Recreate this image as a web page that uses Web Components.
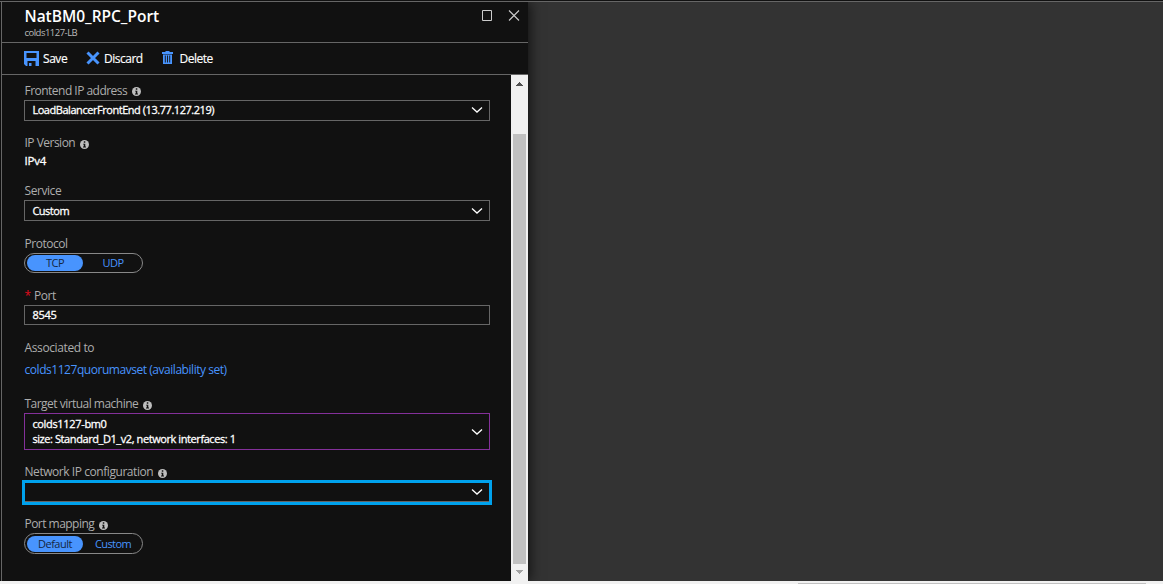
<!DOCTYPE html>
<html lang="en">
<head>
<meta charset="utf-8">
<title>NatBM0_RPC_Port</title>
<style>
html,body{margin:0;height:100%;overflow:hidden;background:#333}
body{font-family:"Open Sans","Noto Sans",sans-serif;font-size:12px;color:#fff}
</style>
</head>
<body>
<portal-page></portal-page>
<script>
function define(name, html, init){
  const t=document.createElement('template');
  t.innerHTML=html;
  customElements.define(name,class extends HTMLElement{
    connectedCallback(){
      if(this.shadowRoot)return;
      this.attachShadow({mode:'open'}).append(t.content.cloneNode(true));
      if(init)init(this,this.shadowRoot);
    }
  });
}

/* Single line of text whose tracking is adjusted to occupy the width in "w" */
define('fit-text',`<style>:host{display:inline-block;white-space:nowrap}span{display:inline-block}</style><span><slot></slot></span>`,(host,root)=>{
  const s=root.querySelector('span'),w=+host.getAttribute('w'),n=host.textContent.length;
  const natural=s.getBoundingClientRect().width;
  s.style.letterSpacing=((w-.8-natural)/n)+'px';
  host.style.width=w+'px';
});

define('info-dot',`<style>:host{display:block;width:9px;height:9px;margin:3px 0 0 4px}svg{display:block}</style>
<svg width="9" height="9" viewBox="0 0 9 9"><circle cx="4.5" cy="4.5" r="4.5" fill="#bebebe"/><path d="M3.8 1.3h1.5v1.4H3.8zM3.1 3.7h2.2v2.8h.7v.9H3v-.9h.8V4.5h-.7z" fill="#111"/></svg>`);

define('down-chevron',`<style>:host{display:block;width:12px;height:8px;margin-bottom:1px}svg{display:block}</style>
<svg width="12" height="8" viewBox="0 0 12 8"><path d="M1 1.5l5 4.6 5-4.6" fill="none" stroke="#fff" stroke-width="1.3"/></svg>`);

define('form-field',`<style>:host{display:block}
.l{display:flex;align-items:center;height:18px;line-height:18px;color:#adadad;font-size:12px;padding-left:.5px}
.r{color:#e00b1c;width:9.5px;font-size:12px}</style>
<div class="l"><slot name="label"></slot></div><slot></slot>`,(host,root)=>{
  if(host.hasAttribute('required')){const r=document.createElement('span');r.className='r';r.textContent='*';root.querySelector('.l').prepend(r);}
});

define('select-box',`<style>:host{display:flex;align-items:center;justify-content:space-between;box-sizing:border-box;width:466px;height:21px;border:1px solid #666;padding:0 6px 0 7.4px;font-size:11px;line-height:15px;-webkit-text-stroke:.3px #fff}
:host([low]){padding-top:1px}
:host([plain]){height:20px}
:host([tall]){height:37px;border-color:#84309a}
:host([tall]) down-chevron{margin-bottom:0}
:host([focused]){width:470px;height:25px;border:3px solid #00a2ed;margin:-1px -2px;box-shadow:inset 0 -1px #666}
div{display:flex;flex-direction:column;margin-bottom:2px}
:host([low]) div{margin-bottom:1px}
:host([low]) down-chevron{margin-bottom:0}</style>
<div><slot></slot></div><down-chevron></down-chevron>`,(host,root)=>{
  if(host.hasAttribute('plain'))root.querySelector('down-chevron').remove();
});

define('option-pill',`<style>:host{display:flex;box-sizing:border-box;width:119px;height:20px;border:1px solid #888;border-radius:11px;padding:1px 2px;font-size:11px;color:#4894fe}
:host([tall]){height:21px;padding-top:2px}
div{flex:none;width:56px;height:16px;line-height:16px;border-radius:8px;text-align:center}
.on{background:#4894fe;color:#14263f}.off{margin-left:2px}</style>
<div class="on"><slot name="on"></slot></div><div class="off"><slot name="off"></slot></div>`);

define('tool-button',`<style>:host{display:flex;align-items:center;font-size:12px;-webkit-text-stroke:.15px #fff}</style><slot></slot>`);

define('v-scrollbar',`<style>:host{display:flex;flex-direction:column;align-items:center;width:17px;background:#f1f1f1}
svg{display:block;flex:none}.t{width:13px;height:430px;background:#c1c1c1;margin:42px 0 0}</style>
<svg width="17" height="17"><path d="M5 11h7v-1h-1v-1h-1v-1H9V7H8v1H7v1H6v1H5z" fill="#505050"/></svg><div class="t"></div>
<svg width="17" height="17"><path d="M5 6h7v1h-1v1h-1v1H9v1H8V9H7V8H6V7H5z" fill="#a3a3a3"/></svg>`);

define('blade-header',`<style>:host{display:flex;justify-content:space-between;height:40px;border-bottom:1px solid #666}
.t{padding:4px 0 0 22.5px}.h{display:block;font-size:15.5px;font-weight:600;line-height:20px;height:20px}
.s{display:block;font-size:9.5px;line-height:12px;color:#bbb;height:12px;margin-top:1px}
svg{display:block;margin:8px 8px 0 0}</style>
<div class="t"><div class="h"><fit-text w="135.5">NatBM0_RPC_Port</fit-text></div><div class="s"><fit-text w="53.5">colds1127-LB</fit-text></div></div>
<svg width="39" height="12" viewBox="0 0 39 12" fill="none" stroke="#ccc"><path d="M1.5.5h9v10h-9z"/><path d="M28 .5l10 10m0-10l-10 10" stroke-width="1.1"/></svg>`);

define('blade-toolbar',`<style>:host{display:flex;height:31px;border-bottom:1px solid #666;padding-left:22px}
svg{display:block}</style>
<tool-button><svg width="19" height="15" viewBox="0 0 19 15"><path fill="#4894fe" fill-rule="evenodd" d="M0 0h15v15H2l-2-2zM2.500 2v5h10V2zM3.500 10v5h8v-5z"/><path fill="#4894fe" d="M5 12h2.500v3H5z"/></svg><fit-text w="25">Save</fit-text></tool-button>
<tool-button style="margin-left:17.5px"><svg width="18.500" height="16" viewBox="0 0 18.5 16"><path stroke="#4894fe" stroke-width="3" d="M1.500 1.500l11 11M12.500 1.500l-11 11"/></svg><fit-text w="39.5">Discard</fit-text></tool-button>
<tool-button style="margin-left:18.5px"><svg width="17.5" height="15" viewBox="0 0 17.5 15"><path fill="#4894fe" d="M3.500 1V0h4v1H11v2H0V1zM1 3.500h9V13H1z"/><path d="M3.300 4.500v7M5.500 4.500v7M7.700 4.500v7" stroke="#111" stroke-width=".9"/></svg><fit-text w="34">Delete</fit-text></tool-button>`);

define('rule-form',`<style>:host{display:block;padding:7px 0 0 22px;width:487px;box-sizing:content-box}
.v{height:18px;line-height:18px;font-size:11.5px;-webkit-text-stroke:.3px #fff;padding-left:.5px}
.a{height:18px;line-height:18px;margin-top:4px;color:#4894fe;padding-left:.5px}</style>
<form-field><fit-text slot="label" w="103.5">Frontend IP address</fit-text><info-dot slot="label" style="margin-top:1px"></info-dot>
<select-box><fit-text w="182.5">LoadBalancerFrontEnd (13.77.127.219)</fit-text></select-box></form-field>
<form-field style="margin-top:13px"><fit-text slot="label" w="51.5">IP Version</fit-text><info-dot slot="label"></info-dot><div class="v"><fit-text w="22.5">IPv4</fit-text></div></form-field>
<form-field style="margin-top:12px"><fit-text slot="label" w="37.5">Service</fit-text><select-box low><fit-text w="37.5">Custom</fit-text></select-box></form-field>
<form-field style="margin-top:14px"><fit-text slot="label" w="44">Protocol</fit-text><option-pill><fit-text slot="on" w="19">TCP</fit-text><fit-text slot="off" w="22">UDP</fit-text></option-pill></form-field>
<form-field required style="margin-top:14px"><fit-text slot="label" w="22.5">Port</fit-text><select-box plain><fit-text w="25">8545</fit-text></select-box></form-field>
<form-field style="margin-top:14px"><fit-text slot="label" w="70.5">Associated to</fit-text><div class="a"><fit-text w="203">colds1127quorumavset (availability set)</fit-text></div></form-field>
<form-field style="margin-top:16px"><fit-text slot="label" w="114.5">Target virtual machine</fit-text><info-dot slot="label"></info-dot><select-box tall><fit-text w="75">colds1127-bm0</fit-text><fit-text w="204">size: Standard_D1_v2, network interfaces: 1</fit-text></select-box></form-field>
<form-field style="margin-top:13px"><fit-text slot="label" w="129.5">Network IP configuration</fit-text><info-dot slot="label"></info-dot><select-box focused></select-box></form-field>
<form-field style="margin-top:11px"><fit-text slot="label" w="70.5">Port mapping</fit-text><info-dot slot="label"></info-dot><option-pill tall><fit-text slot="on" w="35">Default</fit-text><fit-text slot="off" w="37">Custom</fit-text></option-pill></form-field>`);

define('portal-blade',`<style>:host{display:flex;flex-direction:column;width:526px;height:579px;background:#111;border-left:1px solid #666;box-shadow:2px 0 12px #000a}
.b{display:flex;flex:1;min-height:0}</style>
<blade-header></blade-header><blade-toolbar></blade-toolbar><div class="b"><rule-form></rule-form><v-scrollbar></v-scrollbar></div>`);

define('portal-page',`<style>:host{display:flex;flex-direction:column;width:1163px;height:584px;background:#333;overflow:hidden}
.top{height:1px;background:#111;border-bottom:1px solid #666;flex:none}
.m{height:579px;padding-left:1px;background:linear-gradient(90deg,#111 1px,#333 1px);overflow:hidden}
.foot{display:flex;align-items:flex-end;height:3px;background:#f1f1f1}.thumb{margin-left:798px;width:348px;height:1px;background:#c1c1c1}</style>
<div class="top"></div><div class="m"><portal-blade></portal-blade></div><div class="foot"><div class="thumb"></div></div>`);
</script>
</body>
</html>
